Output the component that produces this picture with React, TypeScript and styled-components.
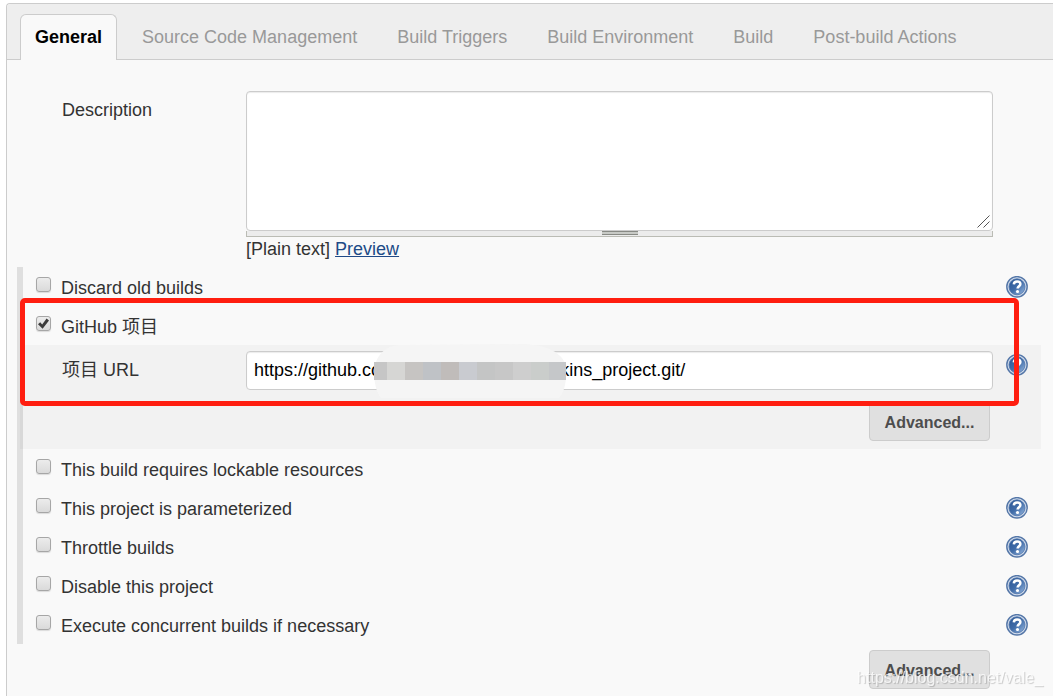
import React, { useId, useState } from "react";
import styled, { createGlobalStyle, css } from "styled-components";

const GlobalStyle = createGlobalStyle`
  *, *::before, *::after { box-sizing: border-box; }
  body {
    margin: 0;
    background: #fff;
    color: #333;
    font: 18px/24px "Liberation Sans", Arial, "Noto Sans CJK SC", sans-serif;
  }
  button, input, textarea { font: inherit; }
`;

const Page = styled.div`
  min-height: 100vh;
  padding: 3px 0 0 6px;
  display: flex;
  overflow: hidden;
`;

const Panel = styled.form`
  flex: 1;
  min-width: 0;
  border: 1px solid #ccc;
  border-width: 1px 0 0 1px;
  border-radius: 4px 0 0 0;
  background: #f9f9f9;
`;

const TabBar = styled.nav`
  display: flex;
  gap: 10px;
  height: 56px;
  padding: 10px 0 0 13px;
  border-bottom: 1px solid #ccc;
  border-radius: 4px 0 0 0;
  background: #eee;
`;

const Tab = styled.button<{ $active: boolean }>`
  height: 46px;
  padding: 0 14px 2px;
  border: 1px solid transparent;
  border-bottom: 0;
  border-radius: 6px 6px 0 0;
  background: transparent;
  color: #999;
  white-space: nowrap;
  cursor: pointer;
  ${({ $active }) =>
    $active &&
    css`
      border-color: #ccc;
      background: #f9f9f9;
      color: #000;
      font-weight: 700;
    `}
`;

const Field = styled.div<{ $inset: number }>`
  display: grid;
  grid-template-columns: 184px minmax(0, 1fr);
  padding-left: ${({ $inset }) => $inset}px;
`;

const FieldLabel = styled.label`
  padding-top: 7px;
`;

const Description = styled.div`
  padding: 31px 60px 6px 0;
`;

const TextAreaWrap = styled.div`
  position: relative;
`;

const TextArea = styled.textarea`
  display: block;
  width: 100%;
  height: 140px;
  padding: 6px 8px;
  border: 1px solid #ccc;
  border-radius: 4px;
  background: #fff;
  box-shadow: inset 0 1px 1px rgba(0, 0, 0, 0.08);
  color: #000;
  resize: vertical;
  &::-webkit-resizer {
    background: transparent;
  }
`;

const ResizeMark = styled.svg`
  position: absolute;
  right: 3px;
  bottom: 3px;
  pointer-events: none;
`;

const ResizeHandle = styled.div`
  display: flex;
  justify-content: center;
  height: 6px;
  border: solid #bbbcb5;
  border-width: 0 1px 1px 1px;
  background: #ececec;
  cursor: s-resize;
  &::before {
    content: "";
    width: 36px;
    height: 4px;
    border: solid #888a85;
    border-width: 1px 0;
    background: #c8cac6;
  }
`;

const Link = styled.a`
  color: #204a87;
  text-decoration: underline;
`;

const Settings = styled.section`
  position: relative;
  margin: 0 12px 0 10px;
  border-left: 6px solid #dfdfdf;
`;

const Row = styled.div`
  display: flex;
  align-items: flex-start;
  height: 39px;
  padding: 9px 13px 0;
`;

const CheckBox = styled.input`
  appearance: none;
  flex: none;
  display: grid;
  place-items: center;
  width: 15px;
  height: 15px;
  margin: 1px 10px 0 0;
  border: 1px solid #a6a6a6;
  border-radius: 3px;
  background: linear-gradient(#ececec, #dadada);
  box-shadow: 0 1px 1px rgba(0, 0, 0, 0.12);
  &:checked::before {
    content: "";
    width: 11px;
    height: 11px;
    background: #3c3c3c;
    clip-path: polygon(0 56%, 20% 38%, 38% 58%, 78% 4%, 100% 22%, 42% 98%);
  }
`;

const RowLabel = styled.label`
  flex: 1;
`;

const HelpButton = styled.button`
  flex: none;
  display: block;
  width: 22px;
  height: 22px;
  padding: 0;
  border: 0;
  background: none;
  cursor: help;
`;

const Nested = styled.div`
  margin-left: -3px;
  padding: 6px 0 8px;
  background: rgba(0, 0, 0, 0.027);
`;

const UrlLine = styled.div`
  display: grid;
  grid-template-columns: minmax(0, 1fr) 22px;
  gap: 13px;
  padding-right: 13px;
`;

const HelpCell = styled.div`
  padding-top: 3px;
`;

const InputWrap = styled.div`
  position: relative;
`;

const TextInput = styled.input`
  display: block;
  width: 100%;
  height: 39px;
  padding: 0 7px;
  border: 1px solid #ccc;
  border-radius: 4px;
  background: #fff;
  box-shadow: inset 0 1px 1px rgba(0, 0, 0, 0.08);
  color: #000;
`;

const Redaction = styled.svg`
  position: absolute;
  top: -7px;
  left: 128px;
  pointer-events: none;
`;

const Actions = styled.div<{ $top: number; $right: number }>`
  display: flex;
  justify-content: flex-end;
  padding: ${({ $top, $right }) => `${$top}px ${$right}px 0 0`};
`;

const ActionButton = styled.button`
  width: 121px;
  height: 39px;
  padding: 2px 0 0;
  border: 1px solid #ccc;
  border-radius: 4px;
  background: #e0e0e0;
  color: #4d4d4d;
  font-size: 16px;
  font-weight: 700;
  cursor: pointer;
`;

const Highlight = styled.div`
  position: absolute;
  top: 31px;
  right: 22px;
  left: -3px;
  height: 108px;
  border: 5px solid #ff1e10;
  border-radius: 5px;
  pointer-events: none;
`;

const Watermark = styled.div`
  position: fixed;
  right: 10px;
  bottom: 6px;
  color: rgba(255, 255, 255, 0.75);
  font-size: 16px;
  text-shadow: 1px 1px 1px rgba(0, 0, 0, 0.2);
  pointer-events: none;
`;

function Help({ topic }: { topic: string }) {
  const id = useId();
  return (
    <HelpButton type="button" aria-label={`Help: ${topic}`}>
      <svg width="22" height="22" viewBox="0 0 22 22" aria-hidden="true">
        <defs>
          <linearGradient id={id} x1="0" y1="0" x2="1" y2="1">
            <stop offset="0" stopColor="#2a5594" />
            <stop offset="0.5" stopColor="#416da9" />
            <stop offset="1" stopColor="#9bbbe2" />
          </linearGradient>
        </defs>
        <circle cx="11" cy="10.8" r="10.2" fill="#cfdaea" stroke="#5577a8" strokeWidth="1.4" />
        <circle cx="11" cy="10.8" r="8" fill={`url(#${id})`} stroke="#4f75ab" strokeWidth="0.8" />
        <path
          d="M7.8 8.4C7.9 6.4 9.2 5.4 11.1 5.4c2 0 3.3 1 3.3 2.6 0 2.2-2.8 2.4-2.8 4.6"
          fill="none"
          stroke="#fff"
          strokeWidth="2.5"
        />
        <circle cx="11.5" cy="15.5" r="1.6" fill="#fff" />
      </svg>
    </HelpButton>
  );
}

const MOSAIC = [
  [0, 13, "#c6c6c6"],
  [13, 18, "#d6d6d4"],
  [31, 18, "#c6c4c2"],
  [49, 18, "#bfc2c6"],
  [67, 18, "#c0bcba"],
  [85, 18, "#c9cbd0"],
  [103, 18, "#c4c5c5"],
  [121, 18, "#c7c7c7"],
  [139, 18, "#cecece"],
  [157, 18, "#cacdcb"],
  [175, 17, "#c5c7c9"],
] as const;

function Option({
  label,
  help = true,
  checked = false,
}: {
  label: string;
  help?: boolean;
  checked?: boolean;
}) {
  const id = useId();
  return (
    <Row>
      <CheckBox id={id} type="checkbox" defaultChecked={checked} />
      <RowLabel htmlFor={id}>{label}</RowLabel>
      {help && <Help topic={label} />}
    </Row>
  );
}

const TABS = [
  "General",
  "Source Code Management",
  "Build Triggers",
  "Build Environment",
  "Build",
  "Post-build Actions",
];

export default function App() {
  const [tab, setTab] = useState(TABS[0]);
  return (
    <Page>
      <GlobalStyle />
      <Panel>
        <TabBar>
          {TABS.map((name) => (
            <Tab key={name} type="button" $active={name === tab} onClick={() => setTab(name)}>
              {name}
            </Tab>
          ))}
        </TabBar>

        <Description>
          <Field $inset={55}>
            <FieldLabel htmlFor="description">Description</FieldLabel>
            <div>
              <TextAreaWrap>
                <TextArea id="description" />
                <ResizeMark width="13" height="13" viewBox="0 0 13 13" aria-hidden="true">
                  <path d="M0.5 12.5L12.5 0.5M6.5 12.5L12.5 6.5" stroke="#555" strokeWidth="1" />
                </ResizeMark>
              </TextAreaWrap>
              <ResizeHandle />
              <div>
                [Plain text] <Link href="#preview">Preview</Link>
              </div>
            </div>
          </Field>
        </Description>

        <Settings>
          <Option label="Discard old builds" />
          <Option label="GitHub 项目" help={false} checked />
          <Nested>
            <UrlLine>
              <Field $inset={42}>
                <FieldLabel htmlFor="project-url">项目 URL</FieldLabel>
                <InputWrap>
                  <TextInput
                    id="project-url"
                    type="text"
                    defaultValue="https://github.com/aaaaaaaaaaaaa/jenkins_project.git/"
                  />
                  <Redaction width="192" height="54" viewBox="0 0 192 54" aria-hidden="true">
                    <path
                      d="M0 26C2 12 10 2 26 1L150 0C172 1 188 8 192 22V34C191 44 189 49 185 54H7C2 48 0 38 0 26Z"
                      fill="#f5f5f5"
                    />
                    {MOSAIC.map(([x, width, fill]) => (
                      <rect key={x} x={x} y="18" width={width} height="18" fill={fill} />
                    ))}
                  </Redaction>
                </InputWrap>
              </Field>
              <HelpCell>
                <Help topic="项目 URL" />
              </HelpCell>
            </UrlLine>
            <Actions $top={12} $right={51}>
              <ActionButton type="button">Advanced...</ActionButton>
            </Actions>
          </Nested>
          <Option label="This build requires lockable resources" help={false} />
          <Option label="This project is parameterized" />
          <Option label="Throttle builds" />
          <Option label="Disable this project" />
          <Option label="Execute concurrent builds if necessary" />
          <Highlight />
        </Settings>

        <Actions $top={6} $right={63}>
          <ActionButton type="button">Advanced...</ActionButton>
        </Actions>
      </Panel>
      <Watermark>https://blog.csdn.net/vale_</Watermark>
    </Page>
  );
}
